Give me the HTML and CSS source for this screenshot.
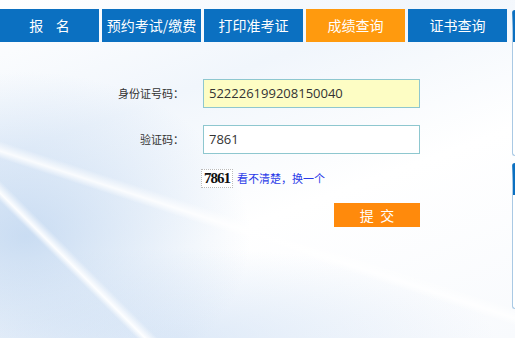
FILE: index.html
```html
<!DOCTYPE html>
<html lang="zh-CN">
<head>
<meta charset="UTF-8" />
<title>成绩查询</title>
<link rel="stylesheet" href="styles.css">
</head>
<body>
<div class="page">
    <div class="main">
        <ul class="tabs">
            <li class="tab">报&nbsp;&nbsp;&nbsp;&nbsp;名</li>
            <li class="tab">预约考试/缴费</li>
            <li class="tab">打印准考证</li>
            <li class="tab active">成绩查询</li>
            <li class="tab">证书查询</li>
        </ul>

        <form class="query">
            <div class="row">
                <label class="label">身份证号码：</label>
                <div class="field filled">522226199208150040</div>
            </div>
            <div class="row">
                <label class="label">验证码：</label>
                <div class="field">7861</div>
            </div>
            <div class="captcha-row">
                <span class="captcha">7861</span>
                <a class="refresh" href="#">看不清楚，换一个</a>
            </div>
            <div class="submit-row">
                <button type="button" class="submit">提&nbsp;&nbsp;交</button>
            </div>
        </form>
    </div>
    <div class="side">
        <div class="side-box"></div>
        <div class="side-box second"></div>
    </div>
</div>
</body>
</html>
```

FILE: styles.css
```css
html, body {
margin: 0;
padding: 0;
overflow: hidden;
}

body {
width: 515px;
height: 338px;
font-family: "Noto Sans CJK SC", "Liberation Sans", sans-serif;
background:
    linear-gradient(45deg, rgba(255,255,255,0) 16%, rgba(255,255,255,0.95) 17%, rgba(255,255,255,0) 18.5%),
    linear-gradient(18deg, rgba(255,255,255,0) 35.5%, rgba(255,255,255,0.85) 37%, rgba(255,255,255,0) 39%),
    radial-gradient(ellipse 300px 220px at 5% 70%, rgba(170, 200, 235, 0.6), rgba(255,255,255,0) 75%),
    radial-gradient(ellipse 420px 120px at 35% 100%, rgba(185, 210, 240, 0.45), rgba(255,255,255,0) 75%),
    linear-gradient(160deg, #ffffff 0%, #f1f6fc 30%, #ffffff 60%, #f8fafd 100%);
}

.page {
display: flex;
gap: 5px;
}

.main {
width: 507px;
flex-shrink: 0;
}

/* 顶部导航 */
.tabs {
list-style: none;
margin: 9px 0 0;
padding: 0;
display: flex;
gap: 3px;
}

.tab {
width: 99px;
height: 33px;
line-height: 33px;
text-align: center;
color: #fff;
font-size: 14px;
background-color: #0b70c1;
}

.tab.active {
background-color: #ff9a0e;
}

/* 查询表单 */
.query {
margin: 37px 0 0;
padding: 0;
}

.row {
display: flex;
align-items: center;
height: 28px;
margin-bottom: 18px;
}

.label {
width: 184px;
text-align: right;
font-size: 11px;
color: #333;
margin-right: 19px;
}

.field {
box-sizing: border-box;
width: 217px;
height: 29px;
line-height: 27px;
padding: 0 5px;
border: 1px solid #8ec7cf;
background: #fff;
font-family: "Open Sans", "Liberation Sans", sans-serif;
font-size: 13px;
color: #333;
}

.field.filled {
background: #fdfdc4;
}

.captcha-row {
display: flex;
align-items: center;
margin: -4px 0 0 201px;
height: 22px;
}

.captcha {
font-family: "Liberation Serif", serif;
font-size: 15px;
font-weight: bold;
color: #111;
padding: 0 2px;
border: 1px dotted #bbb;
letter-spacing: -1px;
margin-right: 4px;
background: #fff;
}

.refresh {
font-size: 11px;
color: #2a3be8;
text-decoration: none;
}

.submit-row {
display: flex;
justify-content: flex-end;
width: 420px;
margin-top: 14px;
}

.submit {
width: 86px;
height: 24px;
border: none;
background-color: #ff8a0c;
color: #fff;
font-family: "Noto Sans CJK SC", sans-serif;
font-size: 14px;
padding: 0;
}

/* 右侧被截断的栏 */
.side {
width: 3px;
flex-shrink: 0;
padding-top: 10px;
}

.side-box {
box-sizing: border-box;
height: 146px;
border: 1px solid #a9c9e4;
border-top: 32px solid #0b70c1;
border-right: none;
border-radius: 3px 0 0 3px;
background: #fff;
}

.side-box.second {
margin-top: 7px;
}
```
